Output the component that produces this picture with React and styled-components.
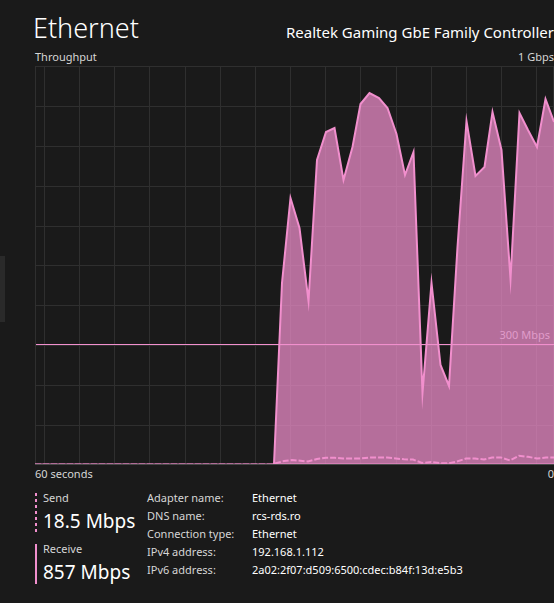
import React from "react";
import styled, { createGlobalStyle } from "styled-components";

const GlobalStyle = createGlobalStyle`
  * { box-sizing: border-box; }
  body {
    margin: 0;
    background: #1a1a1a;
    color: #ffffff;
    font-family: "Noto Sans", "Open Sans", sans-serif;
    font-size: 11px;
    line-height: 18px;
    overflow-x: hidden;
  }
`;

const Page = styled.div`
  display: flex;
  min-height: 100vh;
`;

const Rail = styled.aside`
  flex: none;
  width: 35px;
  padding-top: 256px;
`;

const RailThumb = styled.div`
  width: 5px;
  height: 66px;
  background: #2a2a2a;
`;

const Content = styled.main`
  flex: 1;
  min-width: 0;
`;

const Header = styled.header`
  display: flex;
  justify-content: space-between;
  align-items: baseline;
  margin-left: -2px;
  padding-top: 8px;
  white-space: nowrap;
`;

const Title = styled.h1`
  margin: 0;
  font-size: 27px;
  line-height: 40px;
  font-weight: 350;
`;

const Adapter = styled.h2`
  margin: 0;
  font-size: 15px;
  line-height: 24px;
  font-weight: 400;
`;

const AxisRow = styled.div`
  display: flex;
  justify-content: space-between;
  padding-bottom: 1px;
  line-height: 17px;
  color: #d6d6d6;
`;

const ChartBox = styled.figure`
  position: relative;
  margin: 0;
`;

const Plot = styled.svg`
  display: block;
  width: 100%;
  height: 399px;
`;

const Marker = styled.figcaption`
  position: absolute;
  right: 4px;
  bottom: 30%;
  line-height: 20px;
  color: #e09cca;
`;

const Footer = styled.section`
  display: flex;
  align-items: flex-start;
  gap: 12px;
  padding-top: 6px;
`;

const Rates = styled.div`
  display: flex;
  flex-direction: column;
  gap: 11px;
  width: 100px;
  padding-top: 4px;
`;

const Rate = styled.div`
  display: flex;
  gap: 6px;
  height: 40px;
  white-space: nowrap;
`;

const RateKey = styled.span`
  flex: none;
  width: 2px;
  background: ${({ $dashed }) =>
    $dashed
      ? "repeating-linear-gradient(#f18fcd 0 3px, transparent 3px 6px)"
      : "#f18fcd"};
`;

const RateLabel = styled.div`
  line-height: 10px;
  color: #d6d6d6;
`;

const RateValue = styled.div`
  font-size: 19px;
  line-height: 36px;
`;

const Details = styled.dl`
  display: grid;
  grid-template-columns: 93px auto;
  column-gap: 12px;
  margin: 0;
  white-space: nowrap;
`;

const Term = styled.dt`
  color: #d6d6d6;
`;

const Value = styled.dd`
  margin: 0;
`;

const PINK = "#f18fcd";

const columns = [0, 9, 44, 79, 114, 150, 185, 220, 255, 290, 325, 361, 396, 431, 466, 501, 518];
const rows = [0, 40, 80, 120, 160, 199, 239, 279, 319, 359];

const receive = [
  [239, 398], [247, 217], [255.5, 132], [264.5, 162], [273.5, 235],
  [282, 94], [291, 66], [299.5, 62], [308.5, 114], [317.5, 81], [325.5, 38],
  [334.5, 27], [344, 32], [352.5, 42], [361.5, 68], [370, 109], [378.5, 86],
  [387.5, 327], [396.5, 217], [405.5, 299], [414, 320], [422.5, 181],
  [431.5, 55], [440.5, 110], [449.5, 101], [457.5, 46], [466.5, 84],
  [475.5, 213], [484.5, 47], [493, 64], [502, 81], [510.5, 33], [519, 56],
];

const send = [
  [240, 397.5], [249, 395], [257, 394], [273, 395.5], [282, 393],
  [291, 391.8], [300, 391.8], [308, 392.5], [325, 392.5], [335, 391.6],
  [352, 391.6], [369, 393.3], [378, 393.5], [387, 397], [396, 396],
  [405, 397.2], [414, 397.2], [422, 395.5], [431, 392.5], [440, 392.5],
  [449, 393.5], [457, 391.5], [466, 391.5], [475, 394.5], [484, 389.8],
  [493, 390.8], [502, 392.5], [511, 391.5], [519, 391.5],
];

const toPath = (points) => "M" + points.map((p) => p.join(" ")).join("L");

const details = [
  ["Adapter name:", "Ethernet"],
  ["DNS name:", "rcs-rds.ro"],
  ["Connection type:", "Ethernet"],
  ["IPv4 address:", "192.168.1.112"],
  ["IPv6 address:", "2a02:2f07:d509:6500:cdec:b84f:13d:e5b3"],
];

function ThroughputChart() {
  return (
    <ChartBox>
      <Plot viewBox="0 0 519 399" preserveAspectRatio="none" role="img" aria-label="Throughput">
        <g fill="#2f2f2f">
          {columns.map((x) => <rect key={x} x={x} y="0" width="1" height="399" />)}
          {rows.map((y) => <rect key={y} x="0" y={y} width="519" height="1" />)}
        </g>
        <path d={toPath(receive) + "V398H239Z"} fill={PINK} fillOpacity="0.72" />
        <path
          d={toPath(receive)}
          fill="none"
          stroke={PINK}
          strokeWidth="2"
          strokeMiterlimit="40"
        />
        <path d="M0 397.5H239" stroke={PINK} strokeOpacity="0.5" />
        <path d="M0 397.5H239" stroke={PINK} strokeOpacity="0.4" strokeDasharray="6 2" />
        <path d={toPath(send)} fill="none" stroke={PINK} strokeWidth="2" strokeDasharray="6 2" />
        <rect x="1" y="278" width="518" height="1" fill={PINK} />
        <rect x="239" y="397" width="280" height="1" fill={PINK} fillOpacity="0.5" />
        <rect x="0" y="398" width="519" height="1" fill="#4a4a4a" />
      </Plot>
      <Marker>300 Mbps</Marker>
    </ChartBox>
  );
}

function RateBlock({ label, value, dashed }) {
  return (
    <Rate>
      <RateKey $dashed={dashed} />
      <div>
        <RateLabel>{label}</RateLabel>
        <RateValue>{value}</RateValue>
      </div>
    </Rate>
  );
}

export default function App() {
  return (
    <Page>
      <GlobalStyle />
      <Rail>
        <RailThumb />
      </Rail>
      <Content>
        <Header>
          <Title>Ethernet</Title>
          <Adapter>Realtek Gaming GbE Family Controller</Adapter>
        </Header>
        <AxisRow>
          <span>Throughput</span>
          <span>1 Gbps</span>
        </AxisRow>
        <ThroughputChart />
        <AxisRow>
          <span>60 seconds</span>
          <span>0</span>
        </AxisRow>
        <Footer>
          <Rates>
            <RateBlock label="Send" value="18.5 Mbps" dashed />
            <RateBlock label="Receive" value="857 Mbps" />
          </Rates>
          <Details>
            {details.map(([term, value]) => (
              <React.Fragment key={term}>
                <Term>{term}</Term>
                <Value>{value}</Value>
              </React.Fragment>
            ))}
          </Details>
        </Footer>
      </Content>
    </Page>
  );
}
